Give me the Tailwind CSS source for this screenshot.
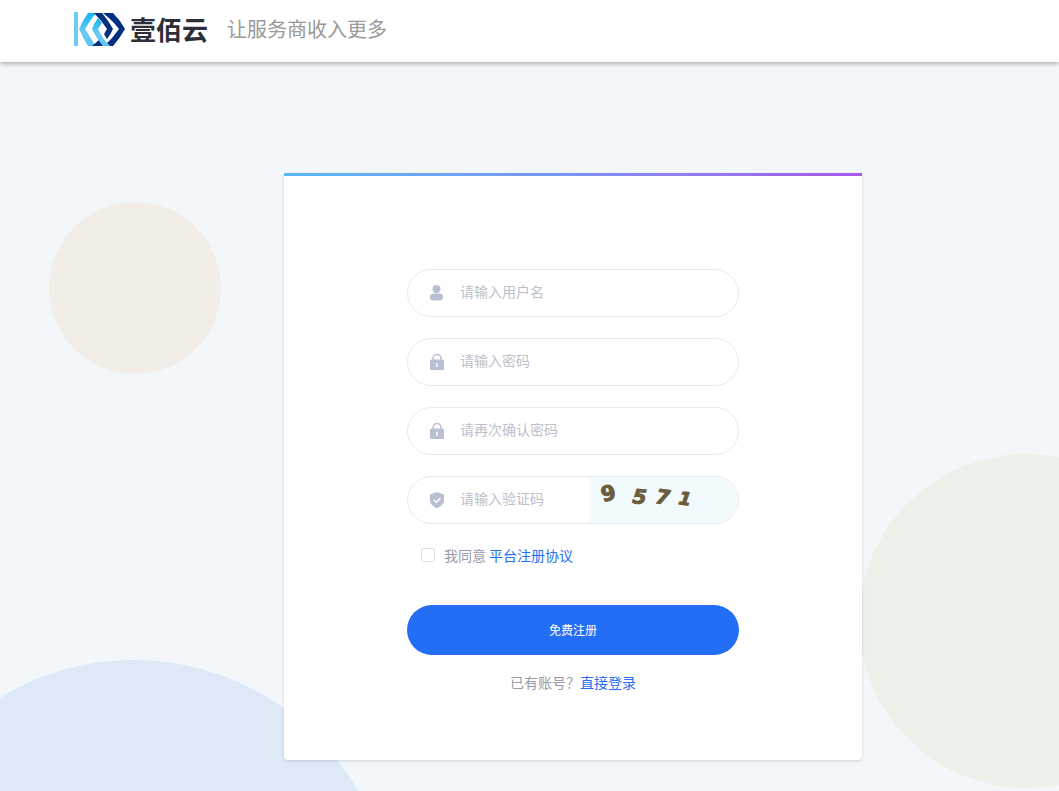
<!DOCTYPE html>
<html lang="zh-CN">
<head>
    <meta charset="UTF-8">
    <meta name="viewport" content="width=device-width, initial-scale=1.0">
    <title>壹佰云 - 免费注册</title>
    <script src="https://cdn.jsdelivr.net/npm/@tailwindcss/browser@4"></script>
</head>
<body class="min-h-screen flex flex-col bg-[#f3f7fa] font-['Noto_Sans_CJK_SC',sans-serif] text-sm text-[#999aaa]">
    <header class="relative z-10 flex items-center h-[62px] pb-1 pl-[74px] bg-white shadow-[0_2px_4px_rgba(0,0,0,0.28)]">
        <svg class="w-[52px] h-[34px]" viewBox="0 0 52 34" aria-hidden="true">
            <defs>
                <linearGradient id="sky" x1="0" y1="0" x2="0" y2="1">
                    <stop offset="0" stop-color="#14b4ee"/>
                    <stop offset="0.6" stop-color="#6ccaf4"/>
                    <stop offset="1" stop-color="#5cc4f2"/>
                </linearGradient>
            </defs>
            <path fill="#6ccaf4" d="M0 0h4v34H0z"/>
            <path fill="url(#sky)" d="M14 1h8L18 6l-7 11 7 11 3 6h-7Q9 26 5 17 9 8 14 1z"/>
            <path fill="#022f80" d="M20 1h8q6 7 11 16-2 5-6 10l-3-5 3-5Q28 9 20 1z"/>
            <path fill="#022f80" d="M29 1h10q7 7 12 16-5 9-12 17h-9q9-8 15-17Q39 9 29 1z"/>
            <path fill="#022f80" d="M18 34l7-6 4 6z"/>
            <path fill="url(#sky)" d="M24 6l4 5-4 6q4 9 12 17h-7q-7-8-11-17 2-6 6-11z"/>
        </svg>
        <h1 class="ml-1 text-[26px] leading-8 font-bold text-[#2d2e38]">壹佰云</h1>
        <p class="ml-[19px] text-xl leading-8 text-[#999999]">让服务商收入更多</p>
    </header>

    <main class="relative flex-1 overflow-hidden flex justify-center items-start pt-[111px] pb-[30px] pl-[87px]">
        <!-- background circles -->
        <div class="absolute left-[49px] top-[140px] size-[172px] rounded-full bg-[#f3ede7]"></div>
        <div class="absolute left-[-123px] top-[598px] size-[514px] rounded-full bg-[#dde9f7]"></div>
        <div class="absolute left-[859px] top-[392px] size-[334px] rounded-full bg-[#eaf2e9]"></div>

        <section class="relative w-[578px] rounded-b-sm bg-white shadow-[0_1px_3px_rgba(0,0,0,0.15)]">
            <div class="h-[3px] bg-linear-to-r from-[#56b8f5] via-[#7b93f8] to-[#a557e8]"></div>
            <form class="mx-auto w-[332px] pt-[93px] pb-[66px]">
                <div class="flex flex-col gap-[21px]">
                    <label class="flex items-center h-12 pl-[22px] rounded-full border border-[#e8eaf0]">
                        <svg class="size-4 shrink-0 fill-[#b9bfd3]" viewBox="0 0 16 16" aria-hidden="true">
                            <circle cx="6.500" cy="4" r="4"/>
                            <rect x="0" y="8.500" width="13" height="7" rx="3.500"/>
                        </svg>
                        <input type="text" placeholder="请输入用户名" aria-label="用户名" class="flex-1 min-w-0 ml-3.5 mb-1 outline-none placeholder:text-[#bcc0cc]">
                    </label>
                    <label class="flex items-center h-12 pl-[22px] rounded-full border border-[#e8eaf0]">
                        <svg class="size-4 shrink-0 fill-[#b9bfd3]" viewBox="0 0 16 16" aria-hidden="true">
                            <path d="M3 7V4.500a4 4 0 0 1 8 0V7" fill="none" stroke="#b9bfd3" stroke-width="1.500"/>
                            <rect x="0" y="5.500" width="14" height="10.500" rx="1.500"/>
                            <rect x="6.300" y="9" width="1.500" height="4" fill="#fff"/>
                        </svg>
                        <input type="password" placeholder="请输入密码" aria-label="密码" class="flex-1 min-w-0 ml-3.5 mb-1 outline-none placeholder:text-[#bcc0cc]">
                    </label>
                    <label class="flex items-center h-12 pl-[22px] rounded-full border border-[#e8eaf0]">
                        <svg class="size-4 shrink-0 fill-[#b9bfd3]" viewBox="0 0 16 16" aria-hidden="true">
                            <path d="M3 7V4.500a4 4 0 0 1 8 0V7" fill="none" stroke="#b9bfd3" stroke-width="1.500"/>
                            <rect x="0" y="5.500" width="14" height="10.500" rx="1.500"/>
                            <rect x="6.300" y="9" width="1.500" height="4" fill="#fff"/>
                        </svg>
                        <input type="password" placeholder="请再次确认密码" aria-label="确认密码" class="flex-1 min-w-0 ml-3.5 mb-1 outline-none placeholder:text-[#bcc0cc]">
                    </label>
                    <div class="flex items-center h-12 pl-[22px] rounded-full border border-[#e8eaf0] overflow-hidden">
                        <svg class="size-4 shrink-0 fill-[#b9bfd3]" viewBox="0 0 16 16" aria-hidden="true">
                            <path d="M7 0l7 2.500V8c0 4-3 6.500-7 8-4-1.500-7-4-7-8V2.500z"/>
                            <path d="M3.800 8l2.400 2.300 4.300-4.300" fill="none" stroke="#fff" stroke-width="1.600"/>
                        </svg>
                        <input type="text" placeholder="请输入验证码" aria-label="验证码" class="flex-1 min-w-0 ml-3.5 mb-1 outline-none placeholder:text-[#bcc0cc]">
                        <button type="button" aria-label="换一张" class="shrink-0 w-[148px] h-full bg-[#f3fafe]">
                            <svg class="w-[148px] h-[46px] fill-[#6b5d3f] stroke-[#6b5d3f] font-['DejaVu_Sans'] font-bold" viewBox="0 0 148 46" font-size="20">
                                <text transform="translate(13 25) rotate(-14)" font-size="21">9</text>
                                <text transform="translate(42 26) rotate(6)" font-style="italic">5</text>
                                <text transform="translate(65 26) rotate(8)" font-style="italic">7</text>
                                <text transform="translate(88 27) rotate(8)" font-size="18" font-style="italic">1</text>
                            </svg>
                        </button>
                    </div>
                </div>

                <div class="flex items-center mt-[19px] pl-3.5 leading-6">
                    <input id="agree" type="checkbox" class="appearance-none size-3.5 rounded-xs border border-[#e0e2ea] bg-white checked:bg-[#236ef5]">
                    <label for="agree" class="ml-[9px]">我同意</label>
                    <a href="#" class="ml-[3px] text-[#236ef5]">平台注册协议</a>
                </div>

                <button type="submit" class="block w-full h-[50px] mt-[38px] rounded-full bg-[#236ef5] text-xs text-white">免费注册</button>

                <p class="mt-[15px] text-center leading-6">已有账号？<a href="#" class="text-[#236ef5]">直接登录</a></p>
            </form>
        </section>
    </main>
</body>
</html>
